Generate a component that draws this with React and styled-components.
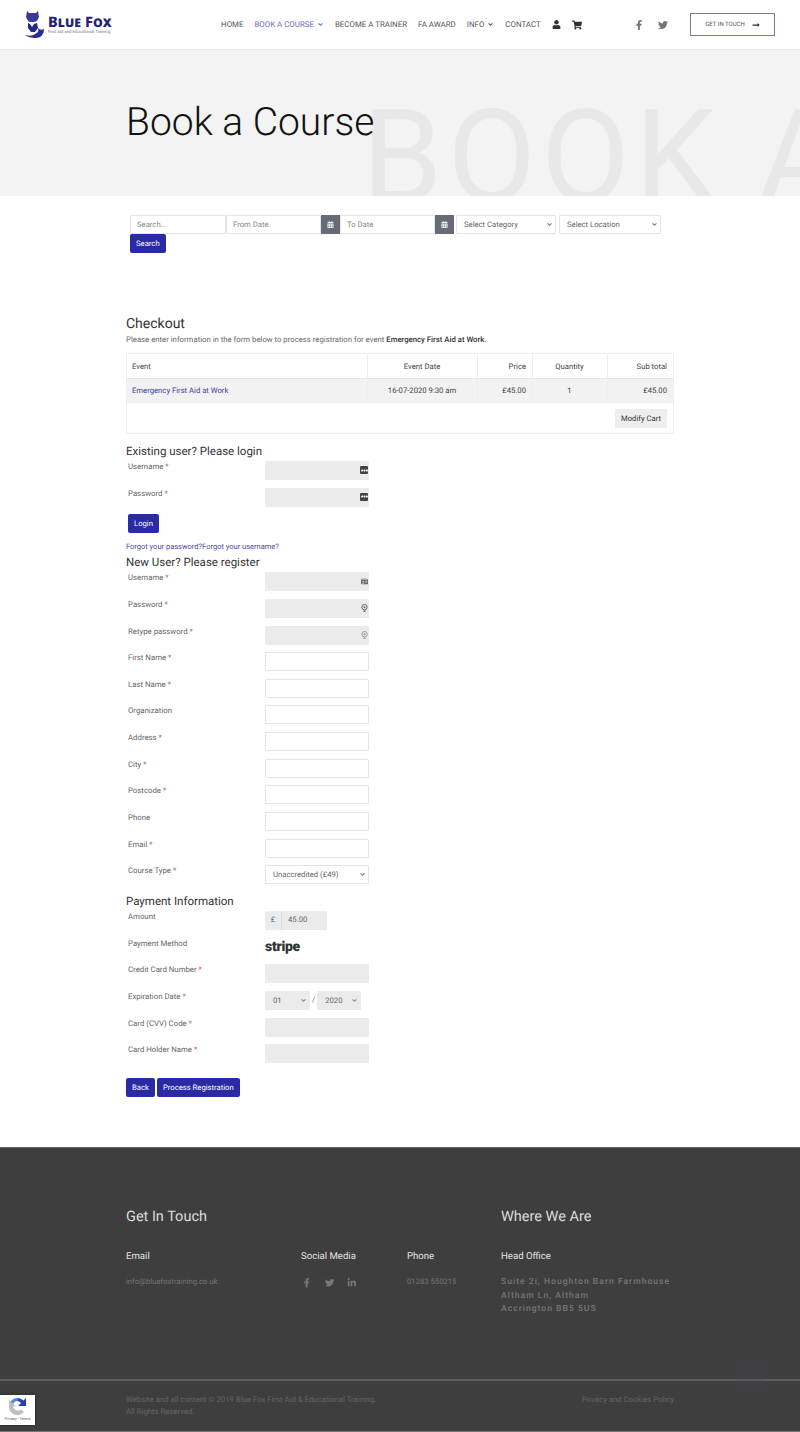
import React from 'react';
import styled, { createGlobalStyle } from 'styled-components';
import {
  FaUser,
  FaShoppingCart,
  FaFacebookF,
  FaTwitter,
  FaLinkedinIn,
  FaCalendarAlt,
  FaLongArrowAltRight,
  FaAngleDown,
  FaEllipsisH,
  FaIdCard,
} from 'react-icons/fa';

const blue = '#2a2aa5';
const font = 'Roboto, "Noto Sans", sans-serif';

const GlobalStyle = createGlobalStyle`
  html, body { margin: 0; padding: 0; background: #fff; }
  body {
    font-family: ${font};
    color: #666;
    overflow-x: hidden;
    text-rendering: geometricPrecision;
  }
  * { box-sizing: border-box; }
  input, select, button { text-rendering: geometricPrecision; }
`;

const Page = styled.div`
  position: relative;
  width: 800px;
  height: 1432px;
  overflow: hidden;
`;

/* header */
const Header = styled.header`
  height: 50px;
  display: flex;
  align-items: center;
  padding: 0 25px 0 24px;
  border-bottom: 1px solid #ececec;
`;
const Logo = styled.div`
  display: flex;
  align-items: center;
  gap: 3px;
  flex: 0 0 197px;
`;
const LogoText = styled.div`
  display: flex;
  flex-direction: column;
  color: #22227a;
  strong {
    font: 800 14.5px/15px "Noto Sans", sans-serif;
    font-variant: small-caps;
    letter-spacing: 0.1px;
  }
  span {
    font-size: 4.2px;
    line-height: 5px;
    color: #777;
    white-space: nowrap;
  }
`;
const Nav = styled.nav`
  display: flex;
  align-items: center;
  gap: 11px;
  font-size: 7.9px;
  color: #555;
  white-space: nowrap;
`;
const NavItem = styled.span`
  display: inline-flex;
  align-items: center;
  gap: 3px;
  color: ${(p) => (p.$active ? '#6b6bb8' : '#555')};
  svg { font-size: 7px; }
`;
const NavIcon = styled.span`
  display: inline-flex;
  color: ${(p) => p.$color || '#333'};
  font-size: ${(p) => p.$size || 10}px;
`;
const HeadSocial = styled.div`
  display: flex;
  align-items: center;
  gap: 14px;
  margin-left: 52px;
  margin-right: auto;
`;
const TouchButton = styled.div`
  flex: 0 0 85px;
  height: 23px;
  border: 1px solid #7a7aa8;
  display: flex;
  align-items: center;
  justify-content: center;
  gap: 7px;
  font-size: 6px;
  color: #555;
  svg { font-size: 8px; color: #333; }
`;

/* hero */
const Hero = styled.section`
  position: relative;
  height: 146px;
  background: #f3f3f3;
  overflow: hidden;
  padding: 48px 0 0 126px;
`;
const HeroTitle = styled.h1`
  position: relative;
  margin: 0;
  font-size: 39px;
  line-height: 48px;
  font-weight: 300;
  color: #111;
`;
const HeroGhost = styled.div`
  position: absolute;
  left: 362px;
  top: 33px;
  font-size: 129px;
  line-height: 150px;
  font-weight: 400;
  color: #e8e8e8;
  white-space: nowrap;
  letter-spacing: 5px;
`;

/* content */
const Content = styled.main`
  width: 548px;
  margin: 0 auto;
`;
const SearchForm = styled.form`
  padding: 19px 0 0 4px;
  height: 120px;
`;
const SearchRow = styled.div`
  display: flex;
  height: 19px;
`;
const Field = styled.input`
  display: block;
  width: ${(p) => p.$w || 104}px;
  height: 19px;
  border: 1px solid ${(p) => (p.$fill ? '#ebebeb' : '#e4e4e4')};
  border-radius: 1px;
  background: ${(p) => (p.$fill ? '#ebebeb' : '#fff')};
  padding: 0 6px;
  font: 7.7px ${font};
  color: #666;
  outline: none;
  &::placeholder { color: #888; }
`;
const CalendarAddon = styled.span`
  width: 19px;
  height: 19px;
  background: #666c75;
  color: #eee;
  display: flex;
  align-items: center;
  justify-content: center;
  font-size: 7px;
  margin-right: ${(p) => p.$gap || 0}px;
`;
const SelectWrap = styled.div`
  position: relative;
  width: ${(p) => p.$w || 104}px;
  height: 19px;
  margin-right: ${(p) => p.$gap || 0}px;
  color: ${(p) => (p.$fill ? '#888' : '#777')};
  svg {
    position: absolute;
    right: 3px;
    top: 6px;
    font-size: 7px;
    pointer-events: none;
  }
`;
const SelectBox = styled.select`
  display: block;
  width: 100%;
  height: 19px;
  appearance: none;
  border: 1px solid ${(p) => (p.$fill ? '#ebebeb' : '#e4e4e4')};
  border-radius: 1px;
  background: ${(p) => (p.$fill ? '#ebebeb' : '#fff')};
  padding: 0 0 0 7px;
  font: 7.7px ${font};
  color: #666;
`;
const Button = styled.button`
  display: block;
  height: 19px;
  margin-left: ${(p) => p.$left || 0}px;
  padding: 0 ${(p) => p.$pad || 6}px;
  border: none;
  border-radius: 2px;
  background: ${blue};
  color: #fff;
  font: 7.7px ${font};
`;
const Heading = styled.h2`
  margin: 0;
  font-size: ${(p) => p.$size || 11.5}px;
  line-height: 16px;
  font-weight: 400;
  color: #333;
`;
const Intro = styled.p`
  margin: 2px 0 7px;
  font-size: 7.76px;
  line-height: 12px;
  color: #666;
  strong { color: #333; font-weight: 500; }
`;
const CartTable = styled.div`
  border: 1px solid #eee;
  height: 81px;
  font-size: 7.7px;
  color: #444;
`;
const CartRow = styled.div`
  display: grid;
  grid-template-columns: 240px 110px 55px 75px 1fr;
  height: ${(p) => (p.$shade ? 25 : 24)}px;
  background: ${(p) => (p.$shade ? '#f2f2f2' : '#fff')};
  box-shadow: ${(p) => (p.$shade ? 'inset 0 1px 0 #e4e4e4' : 'none')};
`;
const CartCell = styled.div`
  display: flex;
  align-items: center;
  justify-content: ${(p) => p.$align || 'flex-start'};
  padding: 0 6px 0 5px;
  border-left: ${(p) => (p.$first ? 'none' : '1px solid #eee')};
  color: ${(p) => (p.$link ? '#3f3f9c' : 'inherit')};
`;
const CartFoot = styled.div`
  height: 30px;
  display: flex;
  align-items: center;
  justify-content: flex-end;
  padding: 0 6px;
`;
const GreyButton = styled.span`
  height: 19px;
  padding: 0 6px;
  background: #eee;
  color: #333;
  border-radius: 1px;
  display: flex;
  align-items: center;
`;
const Section = styled.div`
  padding-top: ${(p) => p.$top || 0}px;
`;
const Row = styled.div`
  display: grid;
  grid-template-columns: 137px 1fr;
  padding-left: 2px;
  height: 19px;
  margin-bottom: 7.65px;
  font-size: 7.8px;
  color: #666;
  line-height: 12px;
`;
const Req = styled.span`
  color: #c66;
`;
const InputWrap = styled.div`
  position: relative;
  width: 104px;
  height: 19px;
`;
const InputIcon = styled.span`
  position: absolute;
  right: 1px;
  top: 5px;
  width: 8px;
  height: 8px;
  display: flex;
  align-items: center;
  justify-content: center;
  font-size: 7px;
  border-radius: ${(p) => (p.$dark ? '1px' : '0')};
  background: ${(p) => (p.$dark ? '#444' : 'none')};
  color: ${(p) => (p.$dark ? '#fff' : p.$soft ? '#999' : '#666')};
`;
const ForgotLinks = styled.div`
  font-size: 7.5px;
  line-height: 12px;
  color: #4c4ca6;
  margin-top: 8px;
`;
const AmountGroup = styled.div`
  display: flex;
  width: 62px;
  height: 19px;
  background: #ebebeb;
  font-size: 7.7px;
  align-items: center;
  border-radius: 1px;
`;
const AmountPrefix = styled.span`
  width: 17px;
  height: 19px;
  display: flex;
  align-items: center;
  justify-content: center;
  background: #e9edf0;
  border-right: 1px solid #ddd;
  margin-right: 6px;
`;
const Stripe = styled.span`
  font-size: 14px;
  line-height: 19px;
  font-weight: 900;
  letter-spacing: -0.3px;
  color: #333;
`;
const Expiry = styled.div`
  display: flex;
  align-items: center;
  gap: 2px;
`;
const Actions = styled.div`
  display: flex;
  gap: 2px;
  margin-top: 15px;
`;

/* footer */
const Footer = styled.footer`
  position: absolute;
  left: 0;
  right: 0;
  top: 1147px;
  height: 285px;
  background: #3e3e3e;
  border-top: 1px solid #666;
  border-bottom: 1px solid #777;
`;
const FooterGrid = styled.div`
  width: 548px;
  height: 231px;
  margin: 0 auto;
  padding-top: 60px;
  display: grid;
  grid-template-columns: 175px 106px 94px 1fr;
  grid-template-rows: 41px 26px auto;
  align-content: start;
`;
const FooterTitle = styled.h3`
  margin: 0;
  font-size: 14.5px;
  line-height: 18px;
  font-weight: 400;
  color: #ddd;
  grid-column: ${(p) => p.$col};
`;
const FooterLabel = styled.div`
  font-size: 9.6px;
  line-height: 16px;
  color: #e4e4e4;
`;
const FooterValue = styled.div`
  font-size: 7.7px;
  line-height: 14px;
  color: #777;
`;
const FooterAddress = styled.div`
  margin-top: 1px;
  font-size: 8.6px;
  line-height: 13.6px;
  letter-spacing: 1px;
  font-weight: 500;
  color: #777;
  white-space: nowrap;
`;
const FooterSocial = styled.div`
  display: flex;
  gap: 13px;
  font-size: 9.5px;
  color: #777;
  padding: 3px 0 0 1px;
`;
const FooterBottom = styled.div`
  border-top: 2px solid #5e5e5e;
`;
const FooterBottomInner = styled.div`
  width: 548px;
  margin: 0 auto;
  padding-top: 13px;
  display: flex;
  justify-content: space-between;
  font-size: 7.75px;
  line-height: 12px;
  color: #666;
`;
const BackToTop = styled.div`
  position: absolute;
  left: 735px;
  top: 1360px;
  width: 30px;
  height: 30px;
  background: rgba(70, 70, 110, 0.12);
`;
const Recaptcha = styled.div`
  position: absolute;
  left: 0;
  top: 1395px;
  width: 35px;
  height: 30px;
  background: #fff;
  box-shadow: 0 0 3px rgba(0, 0, 0, 0.5);
  display: flex;
  flex-direction: column;
  align-items: center;
  padding-top: 2px;
  font-size: 3.8px;
  line-height: 5px;
  color: #555;
`;

const FoxLogo = () => (
  <svg width="21" height="29" viewBox="0 0 21 29">
    <path d="M3 1l2 2h7l2-2 1 6-2 4-3 1H6l-2-1-2-4z" fill="#3a3a9e" />
    <path d="M4 13l2 1 2 3 2-3 3-1 1 5-3 4H7l-3-4z" fill="#26268a" />
    <path d="M14 18c2 2 4 2 6 1 0 5-3 9-8 9-4 0-9-1-11-3 4 1 8 1 10-1 3-1 4-3 3-6z" fill="#2a2a96" />
  </svg>
);

const RecaptchaLogo = () => (
  <svg width="19" height="19" viewBox="0 0 19 19">
    <path d="M9.500 1a8.500 8.500 0 0 1 6 2.500L18 1v8h-8l3-3a5 5 0 0 0-4-2z" fill="#2a3fb0" />
    <path d="M9.500 1A8.500 8.500 0 0 0 2 6l3 2a5 5 0 0 1 4.500-4z" fill="#4a90e2" />
    <path d="M1 9.500a8.500 8.500 0 0 0 15 5.500l-3-2.500a5 5 0 0 1-8-3H8L1 3z" fill="#bdbdbd" />
  </svg>
);

const PinIcon = () => (
  <svg width="7" height="8" viewBox="0 0 7 8">
    <circle cx="3.500" cy="3.200" r="2.700" fill="none" stroke="currentColor" />
    <circle cx="3.500" cy="3.200" r="1" fill="currentColor" />
    <path d="M2.500 6.500h2V8h-2z" fill="currentColor" />
  </svg>
);

const Select = ({ w, gap, fill, children }) => (
  <SelectWrap $w={w} $gap={gap} $fill={fill}>
    <SelectBox $fill={fill}>
      <option>{children}</option>
    </SelectBox>
    <FaAngleDown />
  </SelectWrap>
);

const FormRow = ({ label, req, children }) => (
  <Row>
    <span>
      {label}
      {req && <Req> *</Req>}
    </span>
    {children}
  </Row>
);

const FilledInput = ({ icon, dark, soft }) => (
  <InputWrap>
    <Field $fill $w={104} />
    {icon && <InputIcon $dark={dark} $soft={soft}>{icon}</InputIcon>}
  </InputWrap>
);

const PlainInput = () => <Field $w={104} />;

const App = () => (
  <Page>
    <GlobalStyle />
    <Header>
      <Logo>
        <FoxLogo />
        <LogoText>
          <strong>Blue Fox</strong>
          <span>First Aid and Educational Training</span>
        </LogoText>
      </Logo>
      <Nav>
        <NavItem>HOME</NavItem>
        <NavItem $active>
          BOOK A COURSE <FaAngleDown />
        </NavItem>
        <NavItem>BECOME A TRAINER</NavItem>
        <NavItem>FA AWARD</NavItem>
        <NavItem>
          INFO <FaAngleDown />
        </NavItem>
        <NavItem>CONTACT</NavItem>
        <NavIcon $size={9}>
          <FaUser />
        </NavIcon>
        <NavIcon>
          <FaShoppingCart />
        </NavIcon>
      </Nav>
      <HeadSocial>
        <NavIcon $color="#777">
          <FaFacebookF />
        </NavIcon>
        <NavIcon $color="#777">
          <FaTwitter />
        </NavIcon>
      </HeadSocial>
      <TouchButton>
        GET IN TOUCH <FaLongArrowAltRight />
      </TouchButton>
    </Header>

    <Hero>
      <HeroGhost>BOOK A COURSE</HeroGhost>
      <HeroTitle>Book a Course</HeroTitle>
    </Hero>

    <Content>
      <SearchForm>
        <SearchRow>
          <Field $w={96} placeholder="Search..." />
          <Field $w={95} placeholder="From Date" />
          <CalendarAddon>
            <FaCalendarAlt />
          </CalendarAddon>
          <Field $w={95} placeholder="To Date" />
          <CalendarAddon $gap={2}>
            <FaCalendarAlt />
          </CalendarAddon>
          <Select w={100} gap={3}>Select Category</Select>
          <Select w={102}>Select Location</Select>
        </SearchRow>
        <Button type="button">Search</Button>
      </SearchForm>

      <Heading $size={14}>Checkout</Heading>
      <Intro>
        Please enter information in the form below to process registration for event{' '}
        <strong>Emergency First Aid at Work</strong>.
      </Intro>
      <CartTable>
        <CartRow>
          <CartCell $first>Event</CartCell>
          <CartCell $align="center">Event Date</CartCell>
          <CartCell $align="flex-end">Price</CartCell>
          <CartCell $align="center">Quantity</CartCell>
          <CartCell $align="flex-end">Sub total</CartCell>
        </CartRow>
        <CartRow $shade>
          <CartCell $first $link>Emergency First Aid at Work</CartCell>
          <CartCell $align="center">16-07-2020 9:30 am</CartCell>
          <CartCell $align="flex-end">£45.00</CartCell>
          <CartCell $align="center">1</CartCell>
          <CartCell $align="flex-end">£45.00</CartCell>
        </CartRow>
        <CartFoot>
          <GreyButton>Modify Cart</GreyButton>
        </CartFoot>
      </CartTable>

      <Section $top={9}>
        <Heading>Existing user? Please login</Heading>
        <Section $top={2}>
          <FormRow label="Username" req>
            <FilledInput dark icon={<FaEllipsisH />} />
          </FormRow>
          <FormRow label="Password" req>
            <FilledInput dark icon={<FaEllipsisH />} />
          </FormRow>
        </Section>
        <Button type="button" $pad={6} $left={2}>Login</Button>
        <ForgotLinks>Forgot your password?Forgot your username?</ForgotLinks>
      </Section>

      <Section $top={1}>
        <Heading>New User? Please register</Heading>
        <Section $top={2}>
          <FormRow label="Username" req>
            <FilledInput icon={<FaIdCard />} />
          </FormRow>
          <FormRow label="Password" req>
            <FilledInput icon={<PinIcon />} />
          </FormRow>
          <FormRow label="Retype password" req>
            <FilledInput soft icon={<PinIcon />} />
          </FormRow>
          <FormRow label="First Name " req><PlainInput /></FormRow>
          <FormRow label="Last Name " req><PlainInput /></FormRow>
          <FormRow label="Organization"><PlainInput /></FormRow>
          <FormRow label="Address " req><PlainInput /></FormRow>
          <FormRow label="City " req><PlainInput /></FormRow>
          <FormRow label="Postcode " req><PlainInput /></FormRow>
          <FormRow label="Phone"><PlainInput /></FormRow>
          <FormRow label="Email " req><PlainInput /></FormRow>
          <FormRow label="Course Type " req>
            <Select w={104}>Unaccredited (£49)</Select>
          </FormRow>
        </Section>
      </Section>

      <Section $top={1}>
        <Heading>Payment Information</Heading>
        <Section $top={2}>
          <FormRow label="Amount">
            <AmountGroup>
              <AmountPrefix>£</AmountPrefix>45.00
            </AmountGroup>
          </FormRow>
          <FormRow label="Payment Method">
            <Stripe>stripe</Stripe>
          </FormRow>
          <FormRow label="Credit Card Number" req><FilledInput /></FormRow>
          <FormRow label="Expiration Date" req>
            <Expiry>
              <Select fill w={45}>01</Select>
              /
              <Select fill w={44}>2020</Select>
            </Expiry>
          </FormRow>
          <FormRow label="Card (CVV) Code" req><FilledInput /></FormRow>
          <FormRow label="Card Holder Name" req><FilledInput /></FormRow>
        </Section>
        <Actions>
          <Button type="button">Back</Button>
          <Button type="button">Process Registration</Button>
        </Actions>
      </Section>
    </Content>

    <Footer>
      <FooterGrid>
        <FooterTitle $col="1 / 4">Get In Touch</FooterTitle>
        <FooterTitle $col="4">Where We Are</FooterTitle>
        <FooterLabel>Email</FooterLabel>
        <FooterLabel>Social Media</FooterLabel>
        <FooterLabel>Phone</FooterLabel>
        <FooterLabel>Head Office</FooterLabel>
        <FooterValue>info@bluefoxtraining.co.uk</FooterValue>
        <FooterSocial>
          <FaFacebookF />
          <FaTwitter />
          <FaLinkedinIn />
        </FooterSocial>
        <FooterValue>01283 550215</FooterValue>
        <FooterAddress>
          Suite 2i, Houghton Barn Farmhouse
          <br />
          Altham Ln, Altham
          <br />
          Accrington BB5 5US
        </FooterAddress>
      </FooterGrid>
      <FooterBottom>
        <FooterBottomInner>
          <div>
            Website and all content © 2019 Blue Fox First Aid &amp; Educational Training.
            <br />
            All Rights Reserved.
          </div>
          <div>Privacy and Cookies Policy</div>
        </FooterBottomInner>
      </FooterBottom>
    </Footer>

    <BackToTop />
    <Recaptcha>
      <RecaptchaLogo />
      <span>Privacy - Terms</span>
    </Recaptcha>
  </Page>
);

export default App;
